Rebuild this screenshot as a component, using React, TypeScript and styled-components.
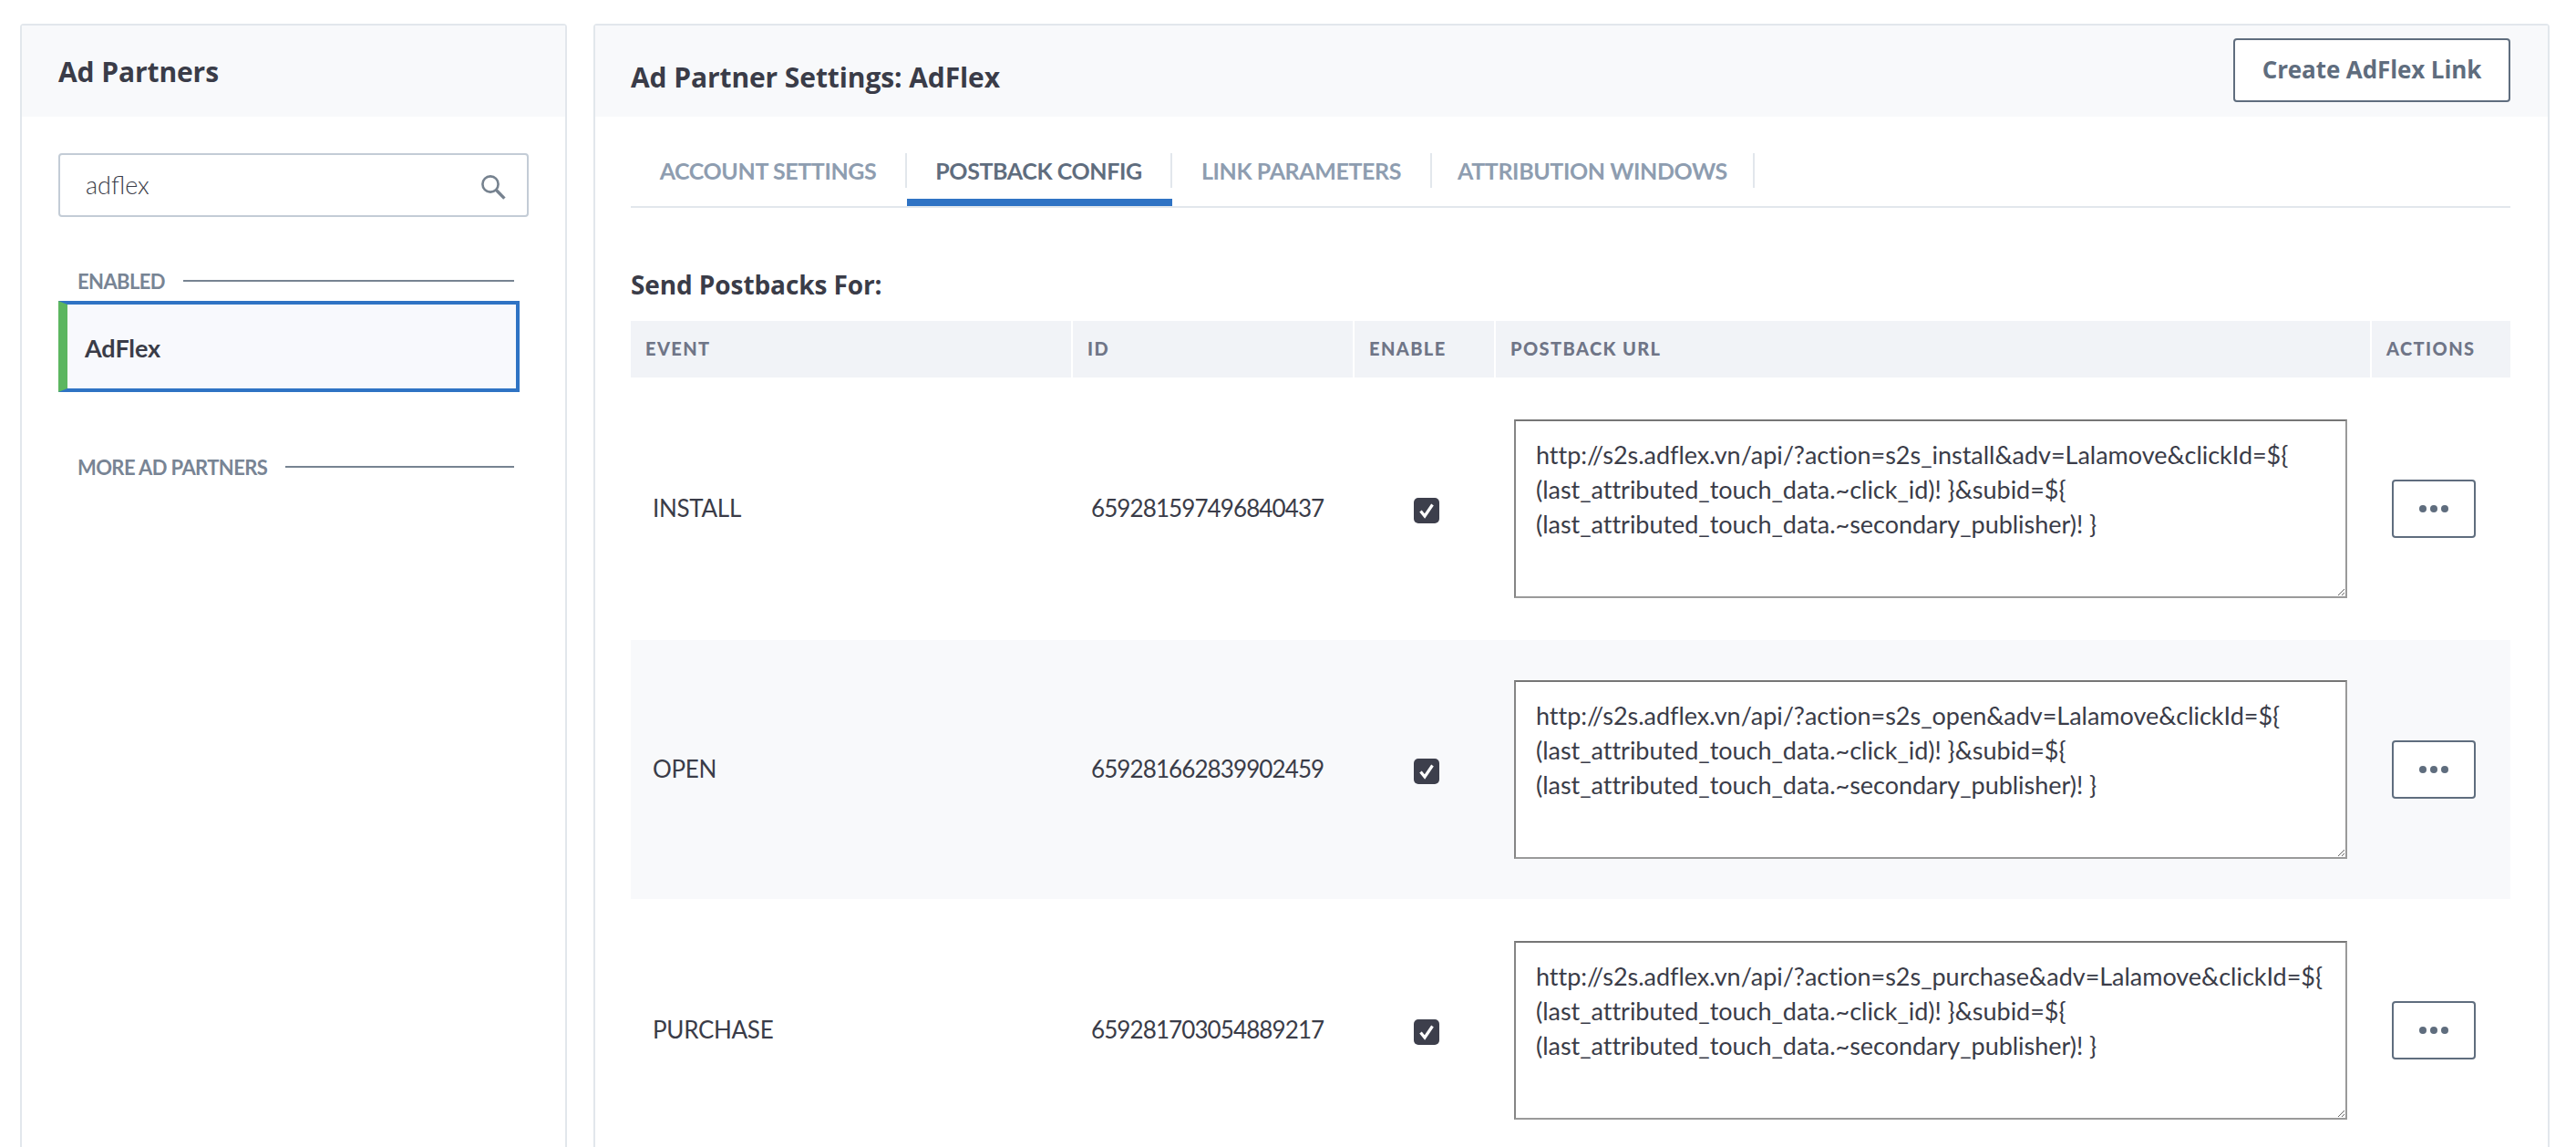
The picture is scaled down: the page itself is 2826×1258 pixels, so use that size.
import React from "react";
import styled, { createGlobalStyle } from "styled-components";

const Global = createGlobalStyle`
  html, body { margin: 0; padding: 0; background: #fff; height: 100%; overflow: hidden; }
  * { box-sizing: border-box; }
  body { font-family: Lato, "Noto Sans", sans-serif; color: #3a3c48; }
`;

const Page = styled.div`
  display: flex;
  gap: 29px;
  height: 1258px;
  padding: 26px 0 0 22px;
  overflow: hidden;
`;

const Panel = styled.section<{ $w: number }>`
  flex: 0 0 ${(p) => p.$w}px;
  height: 1400px;
  border: 2px solid #e2e7ec;
  border-radius: 4px;
`;

const PanelHead = styled.header`
  height: 100px;
  background: #f8f9fb;
  display: flex;
  justify-content: space-between;
  align-items: flex-start;
`;

const SideHead = styled(PanelHead)`
  padding: 31px 0 0 40px;
`;

const Title = styled.h1`
  margin: 0;
  font-family: "Open Sans", sans-serif;
  font-size: 30px;
  line-height: 40px;
  font-weight: 700;
  letter-spacing: -0.1px;
  color: #3a3c48;
`;

const MainHead = styled(PanelHead)`
  padding: 14px 41px 0 39px;
`;

const MainTitle = styled(Title)`
  margin-top: 23px;
`;

const CreateButton = styled.button`
  width: 304px;
  height: 70px;
  border: 2px solid #5f6d7e;
  border-radius: 4px;
  background: #fff;
  color: #5f6d7e;
  font: 700 26px "Open Sans", sans-serif;
  letter-spacing: -0.1px;
  padding: 0 0 2px;
`;

const SideBody = styled.div`
  padding: 40px 40px 0;
`;

const SearchBox = styled.div`
  height: 70px;
  border: 2px solid #c3ccd6;
  border-radius: 4px;
  display: flex;
  align-items: center;
  justify-content: space-between;
  padding: 0 23px 2px 28px;
`;

const SearchText = styled.span`
  font-size: 27px;
  font-weight: 300;
  color: #3a3c48;
`;

const SearchGlyph = styled.svg`
  margin-top: 6px;
`;

const GroupLabel = styled.div<{ $top: number }>`
  display: flex;
  align-items: center;
  gap: 20px;
  margin: ${(p) => p.$top}px 16px 0 21px;
  height: 22px;
  font-size: 22px;
  font-weight: 700;
  letter-spacing: -0.6px;
  color: #788494;
  white-space: nowrap;
  &::after {
    content: "";
    flex: 1;
    height: 2px;
    background: #778391;
  }
`;

const PartnerItem = styled.div`
  margin-top: 11px;
  width: 506px;
  height: 100px;
  border: 4px solid #2f73c4;
  border-left: 10px solid #5cb660;
  background: #f8f9fd;
  display: flex;
  align-items: center;
  padding: 2px 0 0 19px;
  font-size: 27px;
  font-weight: 700;
  letter-spacing: -0.1px;
  color: #3a3c48;
`;

const MainBody = styled.div`
  padding: 40px 41px 0 39px;
`;

const TabBar = styled.nav`
  display: flex;
  border-bottom: 2px solid #e2e7ec;
`;

const Tab = styled.div<{ $w: number; $active?: boolean }>`
  flex: 0 0 ${(p) => p.$w}px;
  height: 58px;
  padding-bottom: 12px;
  border-bottom: 8px solid ${(p) => (p.$active ? "#2f73c4" : "transparent")};
`;

const TabLabel = styled.div<{ $active?: boolean }>`
  height: 38px;
  display: flex;
  align-items: center;
  justify-content: center;
  border-right: 2px solid #e2e7ec;
  font-size: 25px;
  font-weight: 700;
  letter-spacing: -0.4px;
  color: ${(p) => (p.$active ? "#5f6d7e" : "#8e9db0")};
  white-space: nowrap;
`;

const Section = styled.h2`
  margin: 66px 0 22px;
  font-family: "Open Sans", sans-serif;
  font-size: 28px;
  line-height: 36px;
  font-weight: 700;
  letter-spacing: -0.1px;
  color: #3a3c48;
`;

const Table = styled.table`
  width: 2062px;
  table-layout: fixed;
  border-collapse: separate;
  border-spacing: 0;
`;

const Th = styled.th<{ $w: number }>`
  width: ${(p) => p.$w}px;
  height: 64px;
  padding: 0 0 2px 16px;
  background: #f1f3f7;
  background-clip: padding-box;
  border-right: 2px solid #fff;
  border-bottom: 2px solid #fff;
  text-align: left;
  font-size: 20px;
  font-weight: 900;
  letter-spacing: 1.4px;
  color: #6f7587;
  white-space: nowrap;
  &:last-child { border-right: 0; }
`;

const Row = styled.tr<{ $shade?: boolean }>`
  background: ${(p) => (p.$shade ? "#f8f9fb" : "#fff")};
`;

const Td = styled.td<{ $pad?: number }>`
  height: 286px;
  padding: 0 0 0 ${(p) => p.$pad ?? 20}px;
  border-bottom: 2px solid #fff;
  vertical-align: middle;
`;

const TextTd = styled(Td)<{ $tight?: boolean }>`
  padding-bottom: 2px;
  font-size: 26px;
  letter-spacing: ${(p) => (p.$tight ? "-0.9px" : "-0.3px")};
  color: #3a3c48;
`;

const CheckCell = styled.div`
  display: flex;
  justify-content: center;
  margin: 4px 0 0 -18px;
`;

const CheckBox = styled.span`
  width: 28px;
  height: 28px;
  border-radius: 5px;
  background: #3d3f4c;
  display: flex;
  align-items: center;
  justify-content: center;
`;

const UrlArea = styled.textarea`
  display: block;
  width: 914px;
  height: 196px;
  padding: 18px 22px;
  border-width: 2px;
  border-style: solid;
  border-color: #767676 #9a9a9a #9a9a9a #858585;
  border-radius: 0;
  background: #fff;
  outline: none;
  font: 400 27px/38px Lato, sans-serif;
  letter-spacing: -0.03px;
  color: #3a3c48;
  overflow: hidden;
`;

const MoreButton = styled.button`
  width: 92px;
  height: 64px;
  border: 2px solid #5f6d7e;
  border-radius: 4px;
  background: #fff;
  display: flex;
  align-items: center;
  justify-content: center;
  gap: 4px;
  padding: 0;
`;

const Dot = styled.i`
  width: 8px;
  height: 8px;
  border-radius: 50%;
  background: #5f6d7e;
`;

const SearchIcon = () => (
  <SearchGlyph width="28" height="28" viewBox="0 0 28 28" fill="none" stroke="#76828f" strokeWidth="2.6">
    <circle cx="11" cy="11" r="8.6" />
    <path d="M17.2 17.2 L26.4 26.6" strokeWidth="3.4" />
  </SearchGlyph>
);

const CheckIcon = () => (
  <svg width="18" height="18" viewBox="0 0 18 18" fill="none" stroke="#fff" strokeWidth="3.2">
    <path d="M2.5 9.5 L7 15 L15.5 2.5" />
  </svg>
);

const tail = "(last_attributed_touch_data.~click_id)! }&subid=${\n(last_attributed_touch_data.~secondary_publisher)! }";
const url = (action: string) =>
  `http://s2s.adflex.vn/api/?action=${action}&adv=Lalamove&clickId=\${\n${tail}`;

const rows = [
  { event: "INSTALL", id: "659281597496840437", action: "s2s_install" },
  { event: "OPEN", id: "659281662839902459", action: "s2s_open" },
  { event: "PURCHASE", id: "659281703054889217", action: "s2s_purchase" },
];

const tabs = [
  { label: "ACCOUNT SETTINGS", w: 303 },
  { label: "POSTBACK CONFIG", w: 291, active: true },
  { label: "LINK PARAMETERS", w: 285 },
  { label: "ATTRIBUTION WINDOWS", w: 354 },
];

const heads = [
  { label: "EVENT", w: 485 },
  { label: "ID", w: 309 },
  { label: "ENABLE", w: 155 },
  { label: "POSTBACK URL", w: 961 },
  { label: "ACTIONS", w: 152 },
];

export default function App() {
  return (
    <Page>
      <Global />
      <Panel $w={600}>
        <SideHead>
          <Title>Ad Partners</Title>
        </SideHead>
        <SideBody>
          <SearchBox>
            <SearchText>adflex</SearchText>
            <SearchIcon />
          </SearchBox>
          <GroupLabel $top={59}>ENABLED</GroupLabel>
          <PartnerItem>AdFlex</PartnerItem>
          <GroupLabel $top={71}>MORE AD PARTNERS</GroupLabel>
        </SideBody>
      </Panel>
      <Panel $w={2146}>
        <MainHead>
          <MainTitle>Ad Partner Settings: AdFlex</MainTitle>
          <CreateButton>Create AdFlex Link</CreateButton>
        </MainHead>
        <MainBody>
          <TabBar>
            {tabs.map((t) => (
              <Tab key={t.label} $w={t.w} $active={t.active}>
                <TabLabel $active={t.active}>{t.label}</TabLabel>
              </Tab>
            ))}
          </TabBar>
          <Section>Send Postbacks For:</Section>
          <Table>
            <thead>
              <tr>
                {heads.map((h) => (
                  <Th key={h.label} $w={h.w}>{h.label}</Th>
                ))}
              </tr>
            </thead>
            <tbody>
              {rows.map((r, i) => (
                <Row key={r.id} $shade={i === 1}>
                  <TextTd $pad={24}>{r.event}</TextTd>
                  <TextTd $tight>{r.id}</TextTd>
                  <Td>
                    <CheckCell>
                      <CheckBox><CheckIcon /></CheckBox>
                    </CheckCell>
                  </Td>
                  <Td>
                    <UrlArea readOnly defaultValue={url(r.action)} />
                  </Td>
                  <Td $pad={22}>
                    <MoreButton><Dot /><Dot /><Dot /></MoreButton>
                  </Td>
                </Row>
              ))}
            </tbody>
          </Table>
        </MainBody>
      </Panel>
    </Page>
  );
}
